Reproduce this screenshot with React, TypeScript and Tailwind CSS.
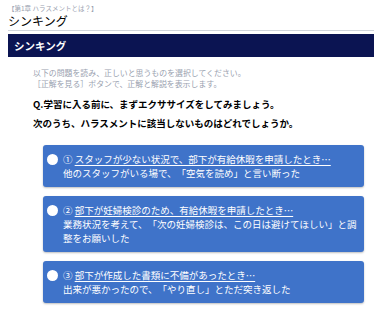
// Thinking exercise screen — chapter 1 quiz intro with three answer cards.

const font = { fontFamily: '"Noto Sans CJK JP", "Noto Sans", sans-serif' };

const choices = [
  {
    no: "①",
    head: "スタッフが少ない状況で、部下が有給休暇を申請したとき…",
    body: "他のスタッフがいる場で、「空気を読め」と言い断った",
  },
  {
    no: "②",
    head: "部下が妊婦検診のため、有給休暇を申請したとき…",
    body: "業務状況を考えて、「次の妊婦検診は、この日は避けてほしい」と調整をお願いした",
  },
  {
    no: "③",
    head: "部下が作成した書類に不備があったとき…",
    body: "出来が悪かったので、「やり直し」とただ突き返した",
  },
];

function ChoiceCard({ no, head, body }: { no: string; head: string; body: string }) {
  return (
    <div className="flex gap-[5px] rounded-[3px] bg-[#3f73c9] pl-[4px] pr-[4px] py-[7px] text-white shadow-[0_1px_2px_rgba(0,0,0,0.25)]">
      <div className="mt-[1.5px] h-[11px] w-[11px] shrink-0 rounded-full bg-white" />
      <div className="flex-1 text-[9.5px] leading-[14px]">
        <p>
          {no}{" "}
          <span className="underline decoration-white underline-offset-[1.5px]">{head}</span>
        </p>
        <p>{body}</p>
      </div>
    </div>
  );
}

export default function App() {
  return (
    <div
      className="h-[315px] w-[384px] overflow-hidden bg-white pl-2 pr-[10px] [text-spacing-trim:space-all]"
      style={font}
    >
      <p className="pt-[3px] text-[6.5px] leading-[10px] text-gray-400">【第1章 ハラスメントとは？】</p>
      <h1 className="border-b border-gray-300 pb-[1px] text-[12px] leading-[16px] text-black">シンキング</h1>

      <div className="mt-[3px] flex h-[23px] items-center bg-[#0b1452] pl-[6px] text-[10.5px] font-bold text-white">
        シンキング
      </div>

      <div className="mt-[10px] pl-[25px] text-[7.9px] leading-[11px] text-gray-400">
        <p>以下の問題を読み、正しいと思うものを選択してください。</p>
        <p>［正解を見る］ボタンで、正解と解説を表示します。</p>
      </div>

      <div className="mt-[6px] pl-[25px] text-[9.5px] font-bold leading-[19px] text-black">
        <p>Q.学習に入る前に、まずエクササイズをしてみましょう。</p>
        <p>次のうち、ハラスメントに該当しないものはどれでしょうか。</p>
      </div>

      <div className="ml-[35px] mr-[10px] mt-[12px] flex flex-col gap-[9px]">
        {choices.map((c) => (
          <ChoiceCard key={c.no} {...c} />
        ))}
      </div>
    </div>
  );
}
